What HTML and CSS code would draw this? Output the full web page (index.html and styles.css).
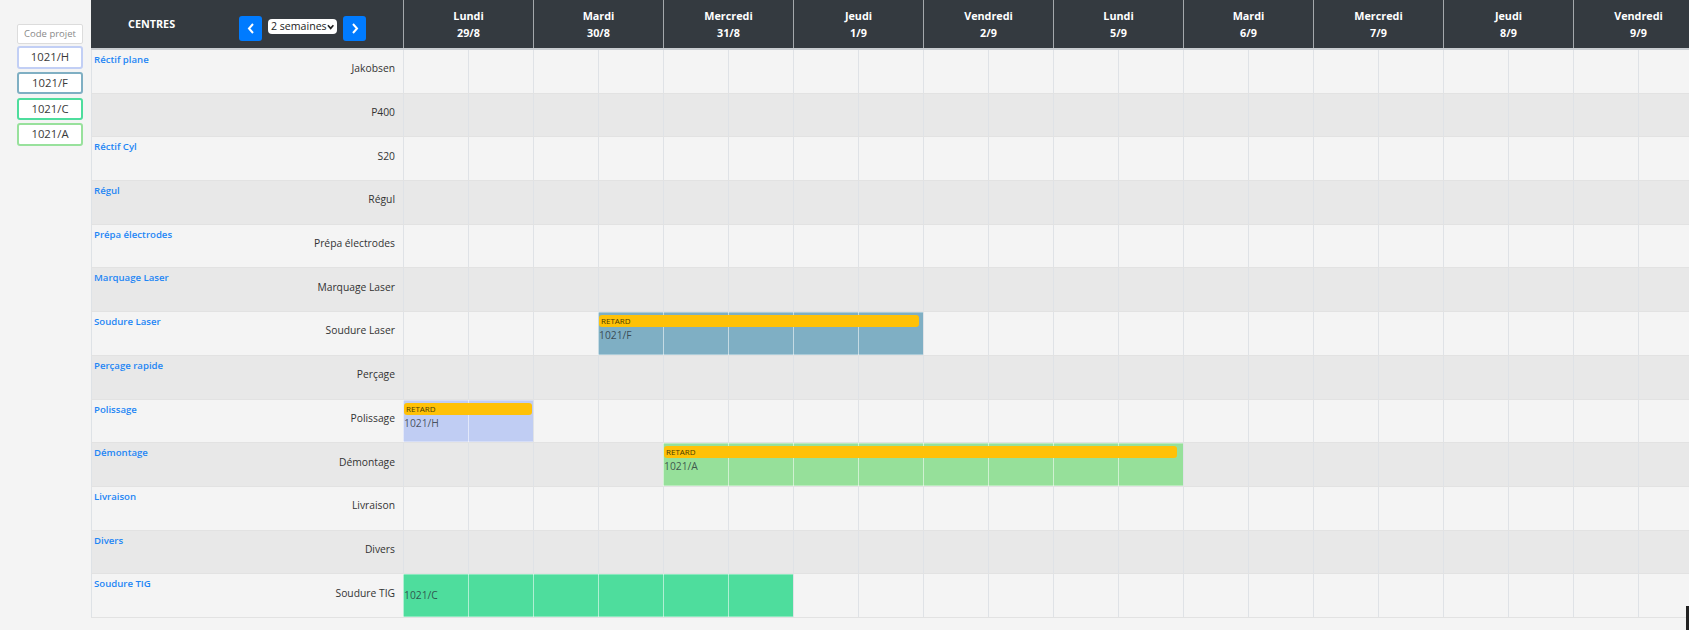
FILE: index.html
```html
<!DOCTYPE html>
<html lang="fr">
<head>
<meta charset="utf-8">
<title>Planning</title>
<link rel="stylesheet" href="styles.css">
</head>
<body>
<div class="page">
  <aside class="legend">
    <div class="code-input">Code projet</div>
    <div class="proj proj-h">1021/H</div>
    <div class="proj proj-f">1021/F</div>
    <div class="proj proj-c">1021/C</div>
    <div class="proj proj-a">1021/A</div>
  </aside>

  <main class="planning">
    <div class="head">
      <div class="head-centres">
        <span class="centres-title">CENTRES</span>
        <div class="controls">
          <button class="nav-btn" type="button"><svg width="8" height="11" viewBox="0 0 8 11"><polyline points="6,1 2,5.5 6,10" fill="none" stroke="#fff" stroke-width="2"/></svg></button>
          <div class="select">2 semaines<svg width="8" height="6" viewBox="0 0 8 6"><polyline points="1,1 4,4.5 7,1" fill="none" stroke="#222" stroke-width="1.8"/></svg></div>
          <button class="nav-btn" type="button"><svg width="8" height="11" viewBox="0 0 8 11"><polyline points="2,1 6,5.5 2,10" fill="none" stroke="#fff" stroke-width="2"/></svg></button>
        </div>
      </div>
      <div class="day">Lundi<br>29/8</div>
      <div class="day">Mardi<br>30/8</div>
      <div class="day">Mercredi<br>31/8</div>
      <div class="day">Jeudi<br>1/9</div>
      <div class="day">Vendredi<br>2/9</div>
      <div class="day">Lundi<br>5/9</div>
      <div class="day">Mardi<br>6/9</div>
      <div class="day">Mercredi<br>7/9</div>
      <div class="day">Jeudi<br>8/9</div>
      <div class="day">Vendredi<br>9/9</div>
    </div>

    <div class="row">
      <div class="center"><span class="group">Réctif plane</span><span class="machine">Jakobsen</span></div>
      <div class="timeline"></div>
    </div>
    <div class="row">
      <div class="center"><span class="machine">P400</span></div>
      <div class="timeline"></div>
    </div>
    <div class="row">
      <div class="center"><span class="group">Réctif Cyl</span><span class="machine">S20</span></div>
      <div class="timeline"></div>
    </div>
    <div class="row">
      <div class="center"><span class="group">Régul</span><span class="machine">Régul</span></div>
      <div class="timeline"></div>
    </div>
    <div class="row">
      <div class="center"><span class="group">Prépa électrodes</span><span class="machine">Prépa électrodes</span></div>
      <div class="timeline"></div>
    </div>
    <div class="row">
      <div class="center"><span class="group">Marquage Laser</span><span class="machine">Marquage Laser</span></div>
      <div class="timeline"></div>
    </div>
    <div class="row">
      <div class="center"><span class="group">Soudure Laser</span><span class="machine">Soudure Laser</span></div>
      <div class="timeline">
        <div class="event ev-f late" style="grid-column: 4 / span 5"><span class="retard">RETARD</span><span class="ev-code">1021/F</span></div>
      </div>
    </div>
    <div class="row">
      <div class="center"><span class="group">Perçage rapide</span><span class="machine">Perçage</span></div>
      <div class="timeline"></div>
    </div>
    <div class="row">
      <div class="center"><span class="group">Polissage</span><span class="machine">Polissage</span></div>
      <div class="timeline">
        <div class="event ev-h late" style="grid-column: 1 / span 2"><span class="retard">RETARD</span><span class="ev-code">1021/H</span></div>
      </div>
    </div>
    <div class="row">
      <div class="center"><span class="group">Démontage</span><span class="machine">Démontage</span></div>
      <div class="timeline">
        <div class="event ev-a late" style="grid-column: 5 / span 8"><span class="retard">RETARD</span><span class="ev-code">1021/A</span></div>
      </div>
    </div>
    <div class="row">
      <div class="center"><span class="group">Livraison</span><span class="machine">Livraison</span></div>
      <div class="timeline"></div>
    </div>
    <div class="row">
      <div class="center"><span class="group">Divers</span><span class="machine">Divers</span></div>
      <div class="timeline"></div>
    </div>
    <div class="row">
      <div class="center"><span class="group">Soudure TIG</span><span class="machine">Soudure TIG</span></div>
      <div class="timeline">
        <div class="event ev-c" style="grid-column: 1 / span 6"><span class="ev-code">1021/C</span></div>
      </div>
    </div>
  </main>
  <div class="corner-mark"></div>
</div>
</body>
</html>
```

FILE: styles.css
```css
* { box-sizing: border-box; }

html, body {
  margin: 0;
  padding: 0;
  background: #f4f4f4;
  overflow: hidden;
}

body {
  font-family: "Open Sans", "Noto Sans", "Liberation Sans", sans-serif;
  font-size: 11px;
  color: #333;
}

.page {
  display: flex;
  align-items: flex-start;
  width: 1689px;
  height: 630px;
  position: relative;
}

/* ---------- legend ---------- */
.legend {
  flex: 0 0 91px;
  padding: 24px 0 0 17px;
  display: flex;
  flex-direction: column;
}

.code-input {
  width: 66px;
  height: 20px;
  background: #fff;
  border: 1px solid #dcdcdc;
  border-radius: 2px;
  color: #8a8a8a;
  font-size: 9.5px;
  line-height: 18px;
  text-align: center;
  margin-bottom: 2px;
}

.proj {
  width: 66px;
  height: 22.5px;
  margin-bottom: 3.3px;
  background: #fff;
  border: 2px solid #ccc;
  border-radius: 3px;
  font-size: 11.3px;
  line-height: 18.5px;
  text-align: center;
  color: #3a3a3a;
}

.proj-h { border-color: #c2cff5; }
.proj-f { border-color: #7fafc3; }
.proj-c { border-color: #4edd9d; }
.proj-a { border-color: #98e19c; }

/* ---------- planning ---------- */
.planning {
  flex: 0 0 auto;
  width: 1598px;
  overflow: hidden;
}

.head {
  display: grid;
  grid-template-columns: 312px repeat(10, 130px);
  width: 1612px;
  height: 50px;
  background: #343a40;
  border-bottom: 2px solid #c9cdd1;
  color: #fff;
  font-weight: 700;
}

.head-centres {
  display: flex;
  justify-content: space-between;
  align-items: flex-start;
  padding: 0 37px;
}

.centres-title {
  margin-top: 17px;
  line-height: 14px;
  font-size: 10.8px;
}

.controls {
  display: flex;
  align-items: flex-start;
  gap: 6px;
  padding-top: 16px;
}

.nav-btn {
  width: 23px;
  height: 25px;
  padding: 0;
  border: 0;
  border-radius: 3px;
  background: #007bff;
  display: flex;
  align-items: center;
  justify-content: center;
}

.select {
  margin-top: 3px;
  width: 69px;
  height: 15px;
  background: #fff;
  border-radius: 4px;
  color: #222;
  font-weight: 400;
  font-size: 10.6px;
  line-height: 15px;
  padding: 0 3px;
  display: flex;
  align-items: center;
  justify-content: space-between;
  white-space: nowrap;
}

.day {
  border-left: 1px solid #a3a7ab;
  text-align: center;
  font-size: 10.8px;
  line-height: 16.5px;
  padding-top: 8px;
}

.row {
  display: grid;
  grid-template-columns: 312px 1300px;
  width: 1612px;
  height: 43.7px;
  background: #f4f4f4;
  border-bottom: 1px solid #e2e2e2;
}

.row:nth-child(odd) {
  background: #e8e8e8;
}

.center {
  display: grid;
  grid-template-areas: "cell";
  border-left: 1px solid #dee2e6;
  padding: 3px 8px 9px 2px;
}

.group {
  grid-area: cell;
  align-self: start;
  justify-self: start;
  color: #1e86f5;
  font-weight: 600;
  font-size: 9.6px;
  line-height: 14px;
}

.machine {
  grid-area: cell;
  align-self: center;
  justify-self: end;
  color: #333;
  font-size: 10.3px;
  line-height: 16px;
}

.timeline {
  display: grid;
  grid-template-columns: repeat(20, 65px);
  background-image: repeating-linear-gradient(90deg, #dfe2e6 0 1px, transparent 1px 65px);
}

.event {
  grid-row: 1;
  display: flex;
  flex-direction: column;
  justify-content: center;
  background-image: repeating-linear-gradient(90deg, rgba(255,255,255,0.55) 0 1px, transparent 1px 65px);
  box-shadow: inset 0 1px 0 rgba(255,255,255,0.35), inset 0 -1px 0 rgba(255,255,255,0.35);
}

.event.late {
  justify-content: flex-start;
  padding-top: 3px;
}

.ev-h { background-color: #c0cdf3; }
.ev-f { background-color: #7fafc4; }
.ev-c { background-color: #4edd9d; }
.ev-a { background-color: #96e09a; }

.retard {
  display: block;
  margin-left: 1px;
  width: 98.6%;
  height: 12px;
  border-radius: 3px;
  background: #ffc107;
  color: #4a3b00;
  font-size: 8px;
  line-height: 12px;
  padding-left: 2px;
}

.ev-code {
  display: block;
  padding-left: 1px;
  line-height: 17px;
  font-size: 10.3px;
  color: rgba(40, 50, 56, 0.8);
}

.corner-mark {
  position: absolute;
  right: 0;
  bottom: 0;
  width: 3px;
  height: 24px;
  background: #222;
}
```
